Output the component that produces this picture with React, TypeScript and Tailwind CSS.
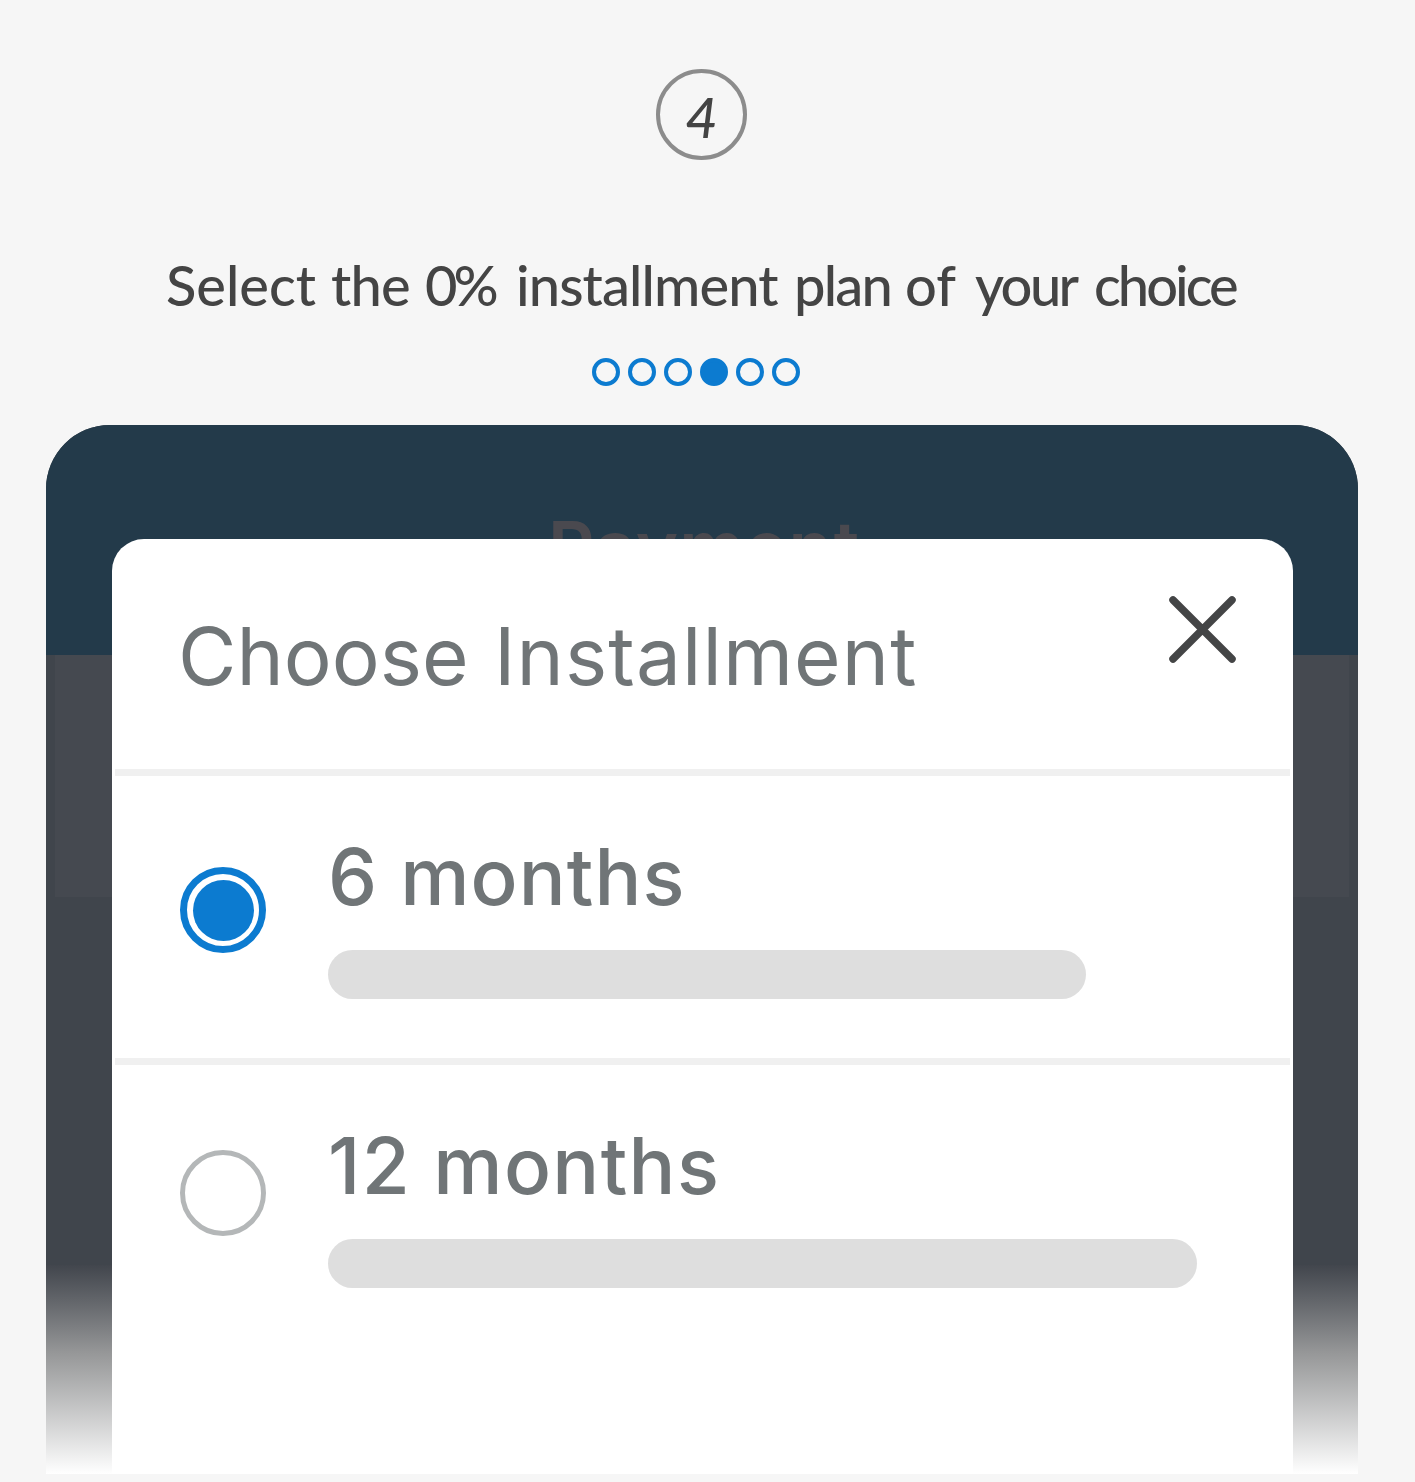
import { clsx } from "clsx";

const titleWords = [
  { text: "Select", style: "w-[165px]" },
  { text: "the", style: "w-[94px] tracking-[-0.8px]" },
  { text: "0%", style: "w-[91px] tracking-[-4px]" },
  { text: "installment", style: "w-[278px] tracking-[-0.9px]" },
  { text: "plan", style: "w-[111px] tracking-[-1.8px]" },
  { text: "of", style: "w-[70px]" },
  { text: "your", style: "w-[119px] tracking-[-2.6px]" },
  { text: "choice", style: "w-[150px] tracking-[-3px]" },
];

function StepDots({ total, current }: { total: number; current: number }) {
  return (
    <div className="mt-[38px] ml-[592px] flex h-7 gap-2">
      {Array.from({ length: total }, (_, i) => (
        <span
          key={i}
          className={clsx("size-7 rounded-full border-4 border-[#0c7bd0]", i === current && "bg-[#0c7bd0]")}
        />
      ))}
    </div>
  );
}

function Option({ label, selected, bar, labelStyle, radioStyle }: {
  label: string; selected?: boolean; bar: string; labelStyle: string; radioStyle: string;
}) {
  return (
    <div className="flex h-[281px] pl-[68px]">
      <div
        className={clsx(
          "flex size-[86px] shrink-0 items-center justify-center rounded-full",
          radioStyle,
          selected ? "border-[7px] border-[#0c7bd0]" : "border-[5px] border-[#b4b7b8]",
        )}
      >
        {selected && <span className="size-[61px] rounded-full bg-[#0c7bd0]" />}
      </div>
      <div className="ml-[62px]">
        <div className={clsx("mt-[61px] h-[80px] text-[78px] leading-[80px] font-medium whitespace-nowrap text-[#707577]", labelStyle)}>
          {label}
        </div>
        <div className={clsx("mt-[33px] h-[49px] rounded-full bg-[#dedede]", bar)} />
      </div>
    </div>
  );
}

export default function App() {
  return (
    <main className="h-[1482px] w-[1415px] overflow-hidden bg-[#f6f6f6] font-['Inter',sans-serif]">
      <div className="flex pt-[69px] pl-[656px]">
        <div className="flex size-[91px] items-center justify-center rounded-full border-4 border-[#8c8c8c] pt-1 font-['Lato',sans-serif] text-[56px] leading-none font-medium text-[#444] italic">
          4
        </div>
      </div>
      <h1 className="mt-[90px] flex h-[70px] pl-[166px] font-['Lato',sans-serif] text-[56px] leading-[70px] font-medium whitespace-nowrap text-[#444]">
        {titleWords.map((word) => (
          <span key={word.text} className={clsx("shrink-0", word.style)}>{word.text}</span>
        ))}
      </h1>
      <StepDots total={6} current={3} />
      <section className="relative mt-[39px] ml-[46px] h-[1049px] w-[1312px] overflow-hidden rounded-t-[64px] bg-[#40454c]">
        <div className="h-[230px] bg-[#233a4a] pt-[76px] pl-1 text-center text-[72px] leading-[92px] font-semibold tracking-[1px] text-[#4a494f]">
          Payment
        </div>
        <div className="mx-[9px] h-[242px] bg-[#454950]" />
        <div className="absolute inset-x-0 bottom-0 h-[209px] bg-linear-to-b from-[#42464d] via-[#969798] via-42% to-white" />
        <div className="absolute top-[114px] left-[66px] h-[935px] w-[1181px] rounded-t-[32px] bg-white">
          <header className="flex h-[230px] justify-between pr-[56px] pl-[66px]">
            <h2 className="mt-[67px] flex h-[100px] text-[80px] leading-[100px] font-normal whitespace-nowrap text-[#707577]">
              <span className="w-[316px]">Choose </span>
              <span className="tracking-[1.1px]">Installment</span>
            </h2>
            <svg className="mt-[56px] size-[69px]" viewBox="0 0 69 69" fill="none" stroke="#444546" strokeWidth="7.5" strokeLinecap="round">
              <path d="M5 5 64 64M64 5 5 64" />
            </svg>
          </header>
          <div className="mx-[3px] h-[7px] bg-[#f0f0f0]" />
          <Option label="6 months" selected bar="w-[758px]" labelStyle="tracking-[1.1px]" radioStyle="mt-[91px]" />
          <div className="mx-[3px] mt-px h-[7px] bg-[#f0f0f0]" />
          <Option label="12 months" bar="w-[869px]" labelStyle="tracking-[1.35px]" radioStyle="mt-[85px]" />
        </div>
      </section>
    </main>
  );
}
